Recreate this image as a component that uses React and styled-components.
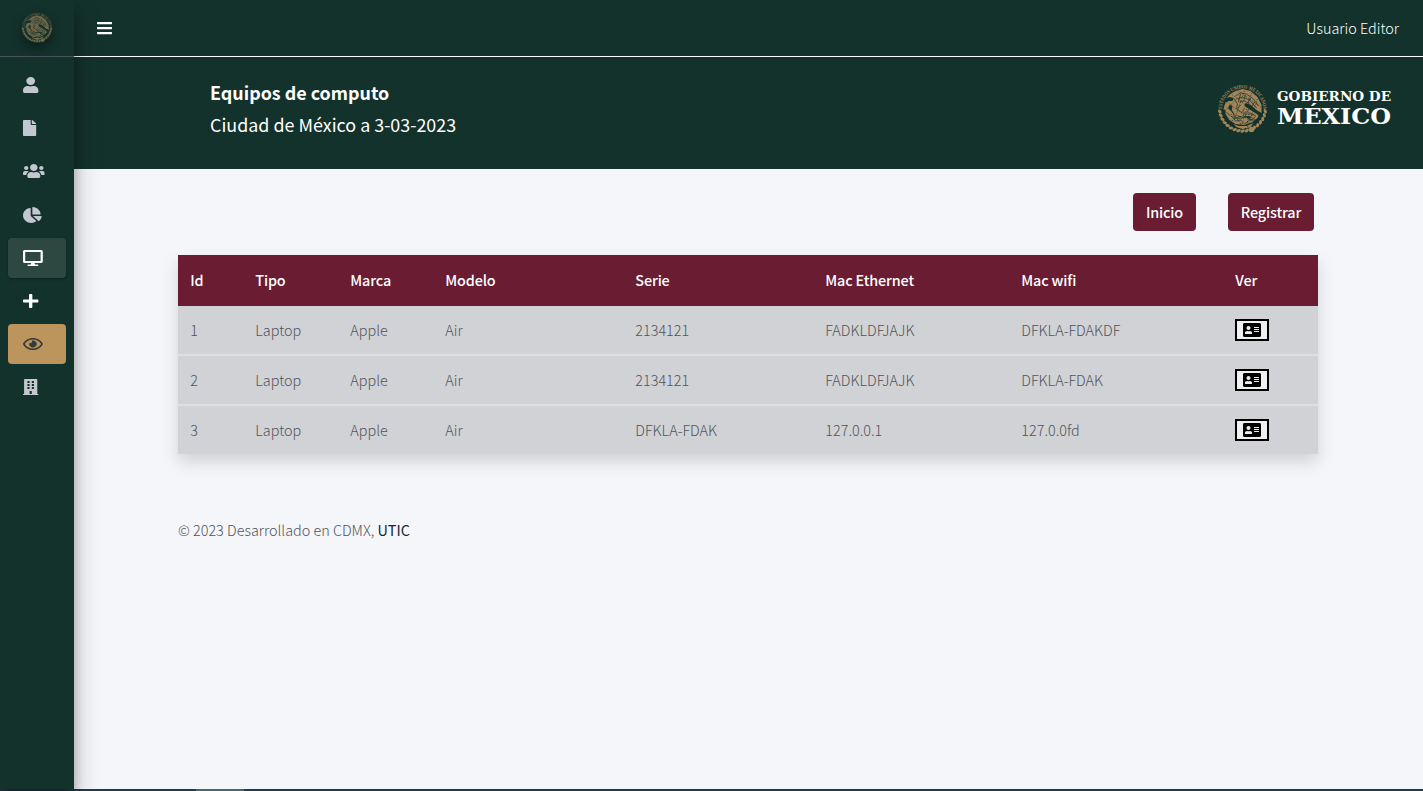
import React from "react";
import styled, { createGlobalStyle } from "styled-components";
import {
  FaUser, FaFile, FaUsers, FaChartPie, FaDesktop, FaPlus, FaRegEye, FaBuilding, FaBars, FaAddressCard,
} from "react-icons/fa";

const green = "#13322b";
const maroon = "#691c32";
const gold = "#bc955c";

const GlobalStyle = createGlobalStyle`
  * { box-sizing: border-box; }
  body {
    margin: 0;
    overflow: hidden;
    background: #f4f6f9;
    color: #212529;
    font-family: "Source Sans Pro", "Noto Sans CJK SC", "Noto Sans", sans-serif;
    font-size: 14.4px;
    font-weight: 300;
    line-height: 24px;
  }
`;

const Page = styled.div`
  display: flex;
  flex-direction: column;
  height: 791px;
`;

const Shell = styled.div`
  display: flex;
  flex: 1;
  min-height: 0;
`;

const Sidebar = styled.aside`
  width: 74px;
  flex: none;
  background: ${green};
  box-shadow: 0 14px 28px rgba(0, 0, 0, 0.25), 0 10px 10px rgba(0, 0, 0, 0.22);
  z-index: 2;
`;

const Brand = styled.div`
  display: flex;
  justify-content: center;
  height: 57px;
  padding-top: 11px;
  border-bottom: 1px solid #4b545c;
`;

const BrandSeal = styled.span`
  width: 32px;
  height: 32px;
  border-radius: 50%;
  opacity: 0.65;
  box-shadow: 0 6px 10px rgba(0, 0, 0, 0.5);
  svg { display: block; overflow: visible; }
`;

const Nav = styled.nav`
  display: flex;
  flex-direction: column;
  gap: 3.2px;
  padding: 8px 8px;
`;

const NavItem = styled.a`
  display: flex;
  align-items: center;
  height: 40px;
  padding-left: 15.4px;
  border-radius: 4px;
  color: ${(p) => p.$color || "#c2c7d0"};
  background: ${(p) => p.$bg || "transparent"};
  box-shadow: ${(p) => (p.$raised ? "0 1px 3px rgba(0,0,0,.12), 0 1px 2px rgba(0,0,0,.24)" : "none")};
  svg { width: ${(p) => p.$w}px; height: 16px; }
`;

const Main = styled.div`
  flex: 1;
  min-width: 0;
`;

const Topbar = styled.header`
  display: flex;
  align-items: center;
  justify-content: space-between;
  height: 57px;
  padding: 0 24px 0 23px;
  background: ${green};
  border-bottom: 1px solid #fff;
  color: #fff;
  svg { width: 15px; height: 16px; }
`;

const Banner = styled.section`
  display: flex;
  justify-content: space-between;
  height: 112px;
  padding: 19px 29px 0 136px;
  background: ${green};
  color: #fff;
`;

const Title = styled.h1`
  margin: 0;
  font-size: 17.9px;
  font-weight: 700;
  line-height: 32px;
`;

const Subtitle = styled.p`
  margin: 0;
  font-size: 17.9px;
  font-weight: 400;
  line-height: 32px;
`;

const Logo = styled.svg`
  display: block;
  margin-top: 5px;
  overflow: visible;
`;

const Content = styled.main`
  width: 1140px;
  margin-left: 104px;
  padding-top: 24px;
`;

const Actions = styled.div`
  display: flex;
  justify-content: flex-end;
  gap: 32px;
  padding-right: 4px;
`;

const Button = styled.button`
  width: ${(p) => p.$w}px;
  height: 38px;
  padding: 0;
  border: 0;
  border-radius: 4px;
  background: ${maroon};
  color: #fff;
  font: inherit;
  font-weight: 500;
  letter-spacing: -0.15px;
`;

const Table = styled.div`
  margin-top: 24px;
  box-shadow: 0 8px 16px rgba(0, 0, 0, 0.15);
`;

const Row = styled.div`
  display: grid;
  grid-template-columns: 65px 95px 95px 190px 190px 196px 214px 95px;
  align-items: center;
  height: 50px;
  background: #d1d2d6;
  color: #50545a;
  border-bottom: 2px solid #dee0e4;
  &:last-child { height: 48px; border-bottom: 0; }
`;

const HeadRow = styled(Row)`
  height: 51px;
  padding-bottom: 1px;
  background: ${maroon};
  color: #fff;
  font-weight: 500;
  letter-spacing: -0.15px;
  border-bottom: 0;
`;

const Cell = styled.span`
  display: flex;
  padding-left: 12.3px;
`;

const CardButton = styled.button`
  display: flex;
  align-items: center;
  justify-content: center;
  width: 34px;
  height: 22px;
  padding: 0;
  border: 2px solid #000;
  background: #f0f0f0;
  color: #000;
  svg { width: 18px; height: 16px; }
`;

const Footer = styled.footer`
  margin-top: 64px;
  color: #50545a;
  strong { color: #212529; font-weight: 400; }
`;

const Taskbar = styled.div`
  height: 2px;
  flex: none;
  padding-left: 196px;
  background: #233b48;
`;

const TaskbarTab = styled.div`
  width: 48px;
  height: 2px;
  background: #4b666c;
`;

const leaves = Array.from({ length: 17 }, (_, i) => {
  const a = ((8 + i * 10.2) * Math.PI) / 180;
  return { x: 26 + 23 * Math.cos(a), y: 26 + 23 * Math.sin(a), r: 8 + i * 10.2 };
});

function SealArt({ id }) {
  return (
    <g fill="#a3855a">
      <path id={id} d="M5.5 27A20.5 20.5 0 0 1 46.5 27L46.5 36" fill="none" />
      <text fontFamily="Liberation Serif, serif" fontSize="5.4" fontWeight="700">
        <textPath href={`#${id}`} textLength="64" lengthAdjust="spacingAndGlyphs">ESTADOS UNIDOS MEXICANOS</textPath>
      </text>
      {leaves.map((l, i) => (
        <ellipse key={i} cx={l.x} cy={l.y} rx="2.3" ry="1.5" transform={`rotate(${l.r + 60} ${l.x} ${l.y})`} />
      ))}
      <circle cx="35" cy="47.5" r="2.8" />
      <path d="M14 12l5-3 7-2 8 2 7 6 4 8 0 8-5-3-6-5-5-2-1 3 6 4 8 5-2 3-8-2-6 1-7-2-4-4 1-5-3-1-3 4-3 1 1-5 4-4 4 0 1-3-4-1-3 1z" />
      <path d="M9 20l4 1-1 5 4 5 7 4 10 1 8-3 1 2-6 5-8 3-9-1-6-4-4-6z" />
      <path d="M17 42l5 2 8 0 7-3-3 4-8 2-6-2z" />
      <g fill="none" stroke={green} strokeWidth=".7">
        <path d="M19 14l5-3 6 1 7 5 5 7M20 17l6-2 7 3 7 8M23 20l5-1 6 4 5 6M14 16l4 1 3 5-1 5 6 4 7 0 5 2" />
        <path d="M11 26l5 3 2 6 6 2 5-3 5 4 5-3M15 34l4 5 5-1 4 4 5-4 5 0M21 27l3-4M26 30l2-4M31 30l1-3M24 12l-2 8M29 13l-2 6M34 16l-3 5M38 20l-3 5" />
        <path d="M10 30c5 7 12 7 16 4s9-1 14 0M15 39l5-3 5 7M32 36l-2 7" strokeDasharray="2 1" />
        <path d="M16 13l26 20M22 9l22 16M13 22l26 19M18 19l-8 8M28 9l-10 28M35 11l-10 33M41 17l-10 28M12 32l28 6" strokeWidth=".8" strokeDasharray="1 1.4" />
      </g>
    </g>
  );
}

const navItems = [
  { icon: FaUser, w: 15.4 },
  { icon: FaFile, w: 13.2 },
  { icon: FaUsers, w: 21.6 },
  { icon: FaChartPie, w: 18.7 },
  { icon: FaDesktop, w: 19.8, color: "#fff", bg: "#2d4841", raised: true },
  { icon: FaPlus, w: 15.4, color: "#fff" },
  { icon: FaRegEye, w: 19.8, color: "#343a40", bg: gold },
  { icon: FaBuilding, w: 15.4 },
];

const headings = ["Id", "Tipo", "Marca", "Modelo", "Serie", "Mac Ethernet", "Mac wifi", "Ver"];
const rows = [
  ["1", "Laptop", "Apple", "Air", "2134121", "FADKLDFJAJK", "DFKLA-FDAKDF"],
  ["2", "Laptop", "Apple", "Air", "2134121", "FADKLDFJAJK", "DFKLA-FDAK"],
  ["3", "Laptop", "Apple", "Air", "DFKLA-FDAK", "127.0.0.1", "127.0.0fd"],
];

export default function App() {
  return (
    <Page>
      <GlobalStyle />
      <Shell>
        <Sidebar>
          <Brand>
            <BrandSeal>
              <svg width="32" height="32" viewBox="0 0 52 52"><SealArt id="brand-ring" /></svg>
            </BrandSeal>
          </Brand>
          <Nav>
            {navItems.map(({ icon: Icon, w, color, bg, raised }, i) => (
              <NavItem key={i} $w={w} $color={color} $bg={bg} $raised={raised}>
                <Icon preserveAspectRatio="none" />
              </NavItem>
            ))}
          </Nav>
        </Sidebar>
        <Main>
          <Topbar>
            <FaBars preserveAspectRatio="none" />
            <span>Usuario Editor</span>
          </Topbar>
          <Banner>
            <div>
              <Title>Equipos de computo</Title>
              <Subtitle>Ciudad de México a 3-03-2023</Subtitle>
            </div>
            <Logo width="178" height="54" viewBox="0 0 178 54">
              <g transform="translate(0.5 1)"><SealArt id="logo-ring" /></g>
              <g fill="#fff" fontFamily="DejaVu Serif, serif" fontWeight="700">
                <text x="61" y="20.3" fontSize="13" textLength="114" lengthAdjust="spacingAndGlyphs">GOBIERNO DE</text>
                <text x="61" y="43.3" fontSize="22" textLength="114" lengthAdjust="spacingAndGlyphs">MÉXICO</text>
              </g>
            </Logo>
          </Banner>
          <Content>
            <Actions>
              <Button $w={63}>Inicio</Button>
              <Button $w={86}>Registrar</Button>
            </Actions>
            <Table>
              <HeadRow>{headings.map((h) => <Cell key={h}>{h}</Cell>)}</HeadRow>
              {rows.map((r) => (
                <Row key={r[0]}>
                  {r.map((v, i) => <Cell key={i}>{v}</Cell>)}
                  <Cell><CardButton><FaAddressCard /></CardButton></Cell>
                </Row>
              ))}
            </Table>
            <Footer>© 2023 Desarrollado en CDMX, <strong>UTIC</strong></Footer>
          </Content>
        </Main>
      </Shell>
      <Taskbar><TaskbarTab /></Taskbar>
    </Page>
  );
}
